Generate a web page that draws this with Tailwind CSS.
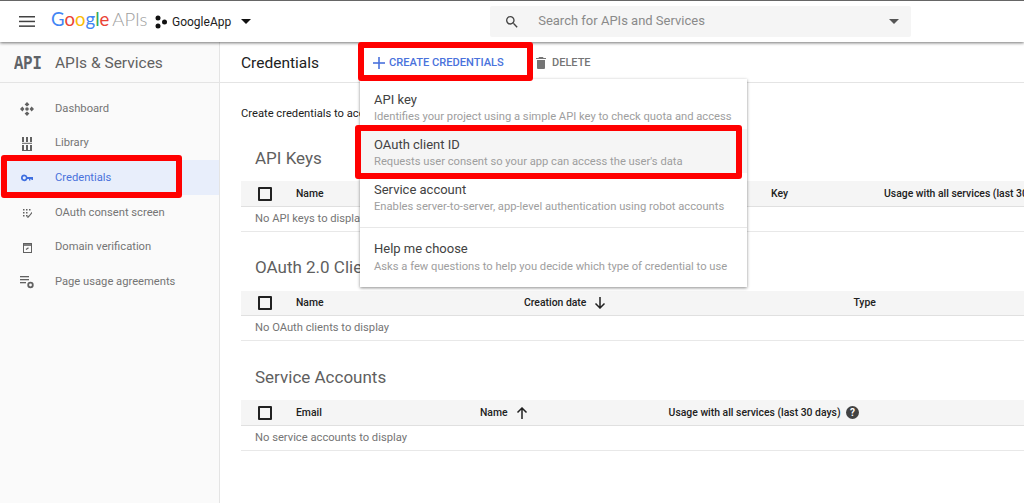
<!DOCTYPE html>
<html lang="en">
<head>
    <meta charset="UTF-8">
    <meta name="viewport" content="width=device-width, initial-scale=1.0">
    <title>Credentials</title>
    <script src="https://cdn.jsdelivr.net/npm/@tailwindcss/browser@4"></script>
</head>
<body class="relative h-[503px] w-[1024px] overflow-hidden bg-white font-['Roboto',sans-serif] text-[#212121]">
    <!-- top bar -->
    <header class="relative z-10 flex h-[42px] items-center border-t border-[#666] bg-white shadow-[0_1px_3px_rgba(0,0,0,0.55)]">
        <svg class="ml-[19px] h-[11px] w-[16px] text-[#424242]" viewBox="0 0 16 11" fill="currentColor"><rect y="0" width="16" height="1.5"/><rect y="4.7" width="16" height="1.5"/><rect y="9.4" width="16" height="1.5"/></svg>
        <div class="ml-[16px] mb-[4px] flex w-[96px] items-baseline font-['Lato',sans-serif] text-[18.500px] leading-none">
            <span class="text-[#4285f4]">G</span><span class="text-[#ea4335]">o</span><span class="text-[#fbbc05]">o</span><span class="text-[#4285f4]">g</span><span class="text-[#34a853]">l</span><span class="text-[#ea4335]">e</span><span class="ml-[3px] font-light text-[#9e9e9e]">APIs</span>
        </div>
        <svg class="ml-[8px] h-[14px] w-[12px]" viewBox="0 0 12 14" fill="#111"><circle cx="3" cy="3" r="2.5"/><circle cx="9.5" cy="7" r="2.5"/><circle cx="3" cy="11" r="2.5"/></svg>
        <span class="ml-[5px] text-[12px]">GoogleApp</span>
        <span class="ml-[10px] h-0 w-0 border-x-[5px] border-t-[5px] border-x-transparent border-t-[#111]"></span>
        <div class="ml-[239px] flex h-[31px] w-[421px] items-center rounded-[2px] bg-[#f5f5f5]">
            <svg class="ml-[14px] h-[16px] w-[16px] text-[#444]" viewBox="0 0 24 24" fill="currentColor"><path d="M15.5 14h-.79l-.28-.27A6.47 6.47 0 0 0 16 9.5 6.5 6.5 0 1 0 9.5 16c1.61 0 3.09-.59 4.23-1.57l.27.28v.79l5 4.99L20.49 19l-4.99-5zm-6 0C7.01 14 5 11.99 5 9.5S7.01 5 9.5 5 14 7.01 14 9.5 11.99 14 9.5 14z"/></svg>
            <span class="mb-[2px] ml-[18px] text-[13px] text-[#8a8a8a]">Search for APIs and Services</span>
            <span class="ml-auto mr-[12px] h-0 w-0 border-x-[5px] border-t-[5px] border-x-transparent border-t-[#555]"></span>
        </div>
    </header>

    <div class="flex h-[461px]">
        <!-- sidebar -->
        <aside class="w-[220px] shrink-0 border-r border-[#e4e4e4] bg-[#fafafa]">
            <div class="flex h-[41px] items-center border-b border-[#e4e4e4] pt-[4px]">
                <span class="ml-[14px] mt-[2px] inline-block w-[41px] origin-center scale-y-125 font-['Liberation_Mono',monospace] text-[15.500px] font-bold leading-none text-[#5f6368]">API</span>
                <span class="text-[15.500px] text-[#616161]">APIs &amp; Services</span>
            </div>
            <nav class="mt-[8px] flex flex-col text-[11.200px] text-[#757575]">
                <a class="flex h-[34.6px] items-center pl-[20px] pt-[2px]">
                    <svg class="mr-[21px] h-[14px] w-[14px] text-[#616161]" viewBox="0 0 14 14" fill="currentColor"><path d="M7 0l2.400 2.400L7 4.400 4.600 2.400zM7 14l-2.400-2.400L7 9.600l2.400 2zM0 7l2.400-2.400L4.400 7 2.400 9.400zM14 7l-2.400 2.400L9.600 7l2-2.400z"/><circle cx="7" cy="7" r="1.800"/></svg>
                    Dashboard
                </a>
                <a class="flex h-[34.6px] items-center pl-[22px] pt-[2px]">
                    <svg class="mr-[23px] h-[14px] w-[10px] text-[#616161]" viewBox="0 0 10 14" fill="currentColor"><rect x="0" y="0" width="2" height="5"/><rect x="4" y="0" width="2" height="5"/><rect x="8" y="0" width="2" height="5"/><rect x="0" y="5.800" width="10" height="1"/><rect x="0" y="8" width="2" height="5"/><rect x="4" y="8" width="2" height="5"/><rect x="8" y="8" width="2" height="5"/><rect x="0" y="13" width="10" height="1"/></svg>
                    Library
                </a>
                <a class="flex h-[34.6px] items-center bg-[#e8eefb] pl-[21px] pt-[2px] text-[#4a72dc]">
                    <svg class="mr-[22px] h-[12px] w-[12px] text-[#3f6fe0]" viewBox="0 0 12 7" fill="currentColor"><path d="M3.3 0a3.3 3.3 0 1 0 3.1 4.4H8v1.6h1.4V4.4H10.4v1.2H12V2.600H6.400A3.300 3.300 0 0 0 3.300 0zm0 1.700a1.600 1.600 0 1 1 0 3.200 1.600 1.600 0 0 1 0-3.200z"/></svg>
                    Credentials
                </a>
                <a class="flex h-[34.6px] items-center pl-[23px] pt-[2px]">
                    <svg class="mr-[23px] h-[9px] w-[9px] text-[#616161]" viewBox="0 0 9 9" fill="currentColor"><rect width="1.500" height="1.500"/><rect x="3" width="1.500" height="1.500"/><rect x="6" width="1.500" height="1.500"/><rect y="3" width="1.500" height="1.500"/><rect x="3" y="3" width="1.500" height="1.500"/><rect y="6" width="1.500" height="1.500"/><rect x="3" y="6" width="1.500" height="1.500"/><path d="M3.800 8.400l1-1.700h1l2.900-3.600.800.700-4.100 5z"/></svg>
                    OAuth consent screen
                </a>
                <a class="flex h-[34.6px] items-center pl-[23px] pt-[2px]">
                    <svg class="mr-[23px] h-[10px] w-[9px] text-[#616161]" viewBox="0 0 9 10" fill="none" stroke="currentColor"><rect x=".5" y=".5" width="8" height="9"/><path d="M0 2h9" stroke-width="1.600"/><path d="M3 6.500l2.500-1.800" stroke-width="1.200"/></svg>
                    Domain verification
                </a>
                <a class="flex h-[34.6px] items-center pl-[20px] pt-[2px]">
                    <svg class="mr-[21px] h-[14px] w-[14px] text-[#616161]" viewBox="0 0 14 14" fill="currentColor"><rect y="1" width="9" height="1.300"/><rect y="4" width="9" height="1.300"/><rect y="7" width="6" height="1.300"/><circle cx="10.500" cy="10" r="2.300" fill="none" stroke="currentColor" stroke-width="1.800"/></svg>
                    Page usage agreements
                </a>
            </nav>
        </aside>

        <!-- main -->
        <main class="min-w-0 flex-1">
            <div class="flex h-[41px] items-center border-b border-[#e4e4e4] pl-[21px] pt-[2px]">
                <h1 class="mt-[2px] w-[132px] text-[15.500px]">Credentials</h1>
                <svg class="h-[12px] w-[12px] text-[#4a72dc]" viewBox="0 0 12 12" fill="currentColor"><rect x="5.200" width="1.600" height="12"/><rect y="5.200" width="12" height="1.600"/></svg>
                <span class="ml-[4px] w-[147px] text-[11.100px] font-medium text-[#4a72dc]">CREATE CREDENTIALS</span>
                <svg class="h-[12px] w-[10px] text-[#757575]" viewBox="0 0 10 12" fill="currentColor"><path d="M1 3h8v8a1 1 0 0 1-1 1H2a1 1 0 0 1-1-1zM0 1h2.500L3 0h4l.5 1H10v1H0z"/></svg>
                <span class="ml-[6px] text-[11px] font-medium text-[#757575]">DELETE</span>
            </div>
            <div class="pl-[21px]">
                <p class="mt-[23px] text-[11.200px] leading-[16px]">Create credentials to access your enabled APIs</p>

                <h2 class="mt-[24px] pl-[14px] text-[17px] leading-[24px] text-[#5f5f5f]">API Keys</h2>
                <div class="mt-[11px] flex h-[26px] items-center whitespace-nowrap border-b border-[#e0e0e0] bg-[#f5f5f5] pt-[1px] text-[10.400px] font-medium">
                    <span class="ml-[17px] h-[14px] w-[14px] shrink-0 rounded-[1px] border-2 border-[#212121]"></span>
                    <span class="ml-[24px] w-[475px] shrink-0">Name</span>
                    <span class="w-[113px] shrink-0">Key</span>
                    <span class="shrink-0">Usage with all services (last 30 days)</span>
                </div>
                <div class="flex h-[25px] items-center border-b border-[#e8e8e8] pl-[14px] text-[11.200px] text-[#757575]">No API keys to display</div>

                <h2 class="mt-[23px] pl-[14px] text-[17px] leading-[24px] text-[#5f5f5f]">OAuth 2.0 Client IDs</h2>
                <div class="mt-[12px] flex h-[25px] items-center border-b border-[#e0e0e0] bg-[#f5f5f5] text-[10.400px] font-medium">
                    <span class="ml-[17px] h-[14px] w-[14px] rounded-[1px] border-2 border-[#212121]"></span>
                    <span class="ml-[24px] w-[228px]">Name</span>
                    <span>Creation date</span>
                    <svg class="ml-[8px] h-[12px] w-[12px]" viewBox="0 0 12 12" fill="none" stroke="#212121" stroke-width="1.500"><path d="M6 0v11M1.500 6.500L6 11l4.500-4.500"/></svg>
                    <span class="ml-[247px]">Type</span>
                </div>
                <div class="flex h-[25px] items-center border-b border-[#e8e8e8] pl-[14px] text-[11.200px] text-[#757575]">No OAuth clients to display</div>

                <h2 class="mt-[24px] pl-[14px] text-[17px] leading-[24px] text-[#5f5f5f]">Service Accounts</h2>
                <div class="mt-[11px] flex h-[26px] items-center border-b border-[#e0e0e0] bg-[#f5f5f5] text-[10.400px] font-medium">
                    <span class="ml-[17px] h-[14px] w-[14px] rounded-[1px] border-2 border-[#212121]"></span>
                    <span class="ml-[24px] w-[184px]">Email</span>
                    <span>Name</span>
                    <svg class="ml-[8px] h-[12px] w-[12px]" viewBox="0 0 12 12" fill="none" stroke="#212121" stroke-width="1.500"><path d="M6 12V1M1.500 5.500L6 1l4.500 4.500"/></svg>
                    <span class="ml-[141px]">Usage with all services (last 30 days)</span>
                    <svg class="ml-[5px] h-[13px] w-[13px]" viewBox="0 0 13 13"><circle cx="6.500" cy="6.500" r="6.500" fill="#424242"/><text x="6.500" y="10" text-anchor="middle" font-size="10" font-weight="700" fill="#fff" font-family="Roboto">?</text></svg>
                </div>
                <div class="flex h-[25px] items-center border-b border-[#e8e8e8] pl-[14px] text-[11.200px] text-[#757575]">No service accounts to display</div>
            </div>
        </main>
    </div>

    <!-- dropdown menu -->
    <div class="absolute left-[360px] top-[79px] z-20 h-[208px] w-[387px] bg-white pl-[14px] shadow-[0_1px_3px_rgba(0,0,0,0.45)]">
        <div class="pt-[13px]">
            <p class="text-[13px] leading-[16px] text-[#424242]">API key</p>
            <p class="mt-[1px] text-[11.200px] leading-[16px] text-[#9e9e9e]">Identifies your project using a simple API key to check quota and access</p>
        </div>
        <div class="absolute inset-x-0 top-[50px] h-[44px] bg-[#f5f5f5] pl-[14px] pt-[8px]">
            <p class="text-[13px] leading-[16px] text-[#424242]">OAuth client ID</p>
            <p class="mt-[1px] text-[11.200px] leading-[16px] text-[#9e9e9e]">Requests user consent so your app can access the user's data</p>
        </div>
        <div class="mt-[57px]">
            <p class="text-[13px] leading-[16px] text-[#424242]">Service account</p>
            <p class="mt-[1px] text-[11.200px] leading-[16px] text-[#9e9e9e]">Enables server-to-server, app-level authentication using robot accounts</p>
        </div>
        <div class="-ml-[14px] mt-[12px] border-t border-[#e8e8e8] pl-[14px] pt-[13px]">
            <p class="text-[13px] leading-[16px] text-[#424242]">Help me choose</p>
            <p class="mt-[2px] text-[11.200px] leading-[16px] text-[#9e9e9e]">Asks a few questions to help you decide which type of credential to use</p>
        </div>
    </div>

    <!-- red highlight boxes -->
    <div class="absolute left-[1px] top-[155px] z-30 h-[43px] w-[181px] rounded-[3px] border-[6px] border-[#f00]"></div>
    <div class="absolute left-[358px] top-[42px] z-30 h-[39px] w-[175px] rounded-[3px] border-[6px] border-[#f00]"></div>
    <div class="absolute left-[355px] top-[125px] z-30 h-[54px] w-[387px] rounded-[3px] border-[6px] border-[#f00]"></div>
</body>
</html>
